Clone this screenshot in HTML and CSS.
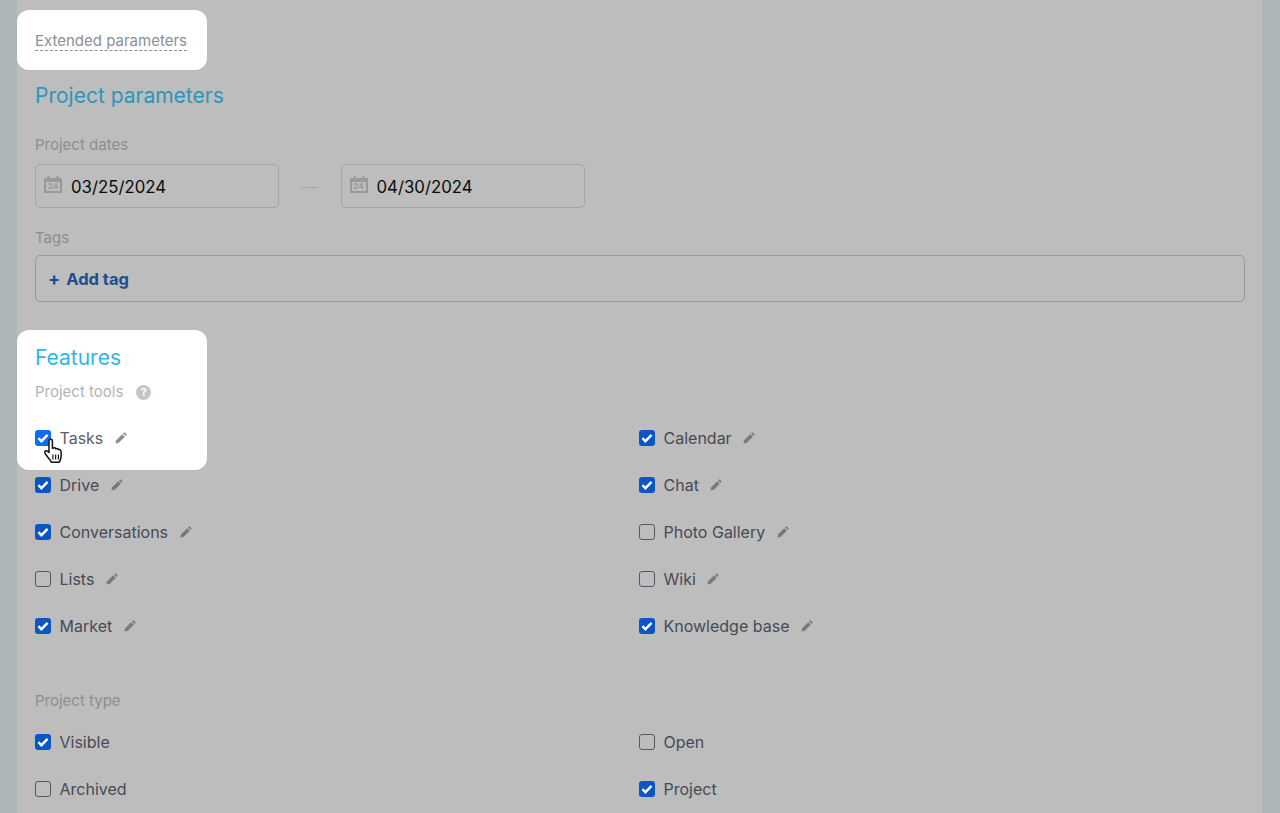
FILE: index.html
```html
<!DOCTYPE html>
<html lang="en">
<head>
<meta charset="utf-8">
<title>Project parameters</title>
<link rel="stylesheet" href="styles.css">
</head>
<body>
<svg class="defs" width="0" height="0" aria-hidden="true">
  <symbol id="pencil" viewBox="0 0 12 12">
    <path d="M0.4 11.6l0.8-3.4 6-6 2.6 2.6-6 6z" fill="currentColor"/>
    <path d="M8.1 1.4l0.8-0.8q0.5-0.4 1 0l1.5 1.5q0.4 0.5 0 1l-0.8 0.8z" fill="currentColor"/>
  </symbol>
  <symbol id="check" viewBox="0 0 16 16">
    <path d="M3.4 8.2l3 3 6.2-6.4" fill="none" stroke="#fff" stroke-width="2.4"/>
  </symbol>
  <symbol id="cal" viewBox="0 0 20 18">
    <path d="M1 3h18v15H1z" fill="#999"/>
    <path d="M3 7h14v9H3z" fill="#bdbdbd"/>
    <rect x="4.5" y="1" width="2" height="3.5" fill="#999"/>
    <rect x="13.5" y="1" width="2" height="3.5" fill="#999"/>
  </symbol>
</svg>
<main class="panel">
  <div class="spot spot-tools"></div>
  <div class="ext-spot"><span class="ext-link">Extended parameters</span></div>
  <h2 class="title project-title">Project parameters</h2>
  <div class="label dates-label">Project dates</div>
  <div class="dates">
    <div class="date-input"><span class="cal-wrap"><svg class="cal-icon"><use href="#cal"/></svg><span class="cal-num">24</span></span><span>03/25/2024</span></div>
    <span class="date-dash"></span>
    <div class="date-input"><span class="cal-wrap"><svg class="cal-icon"><use href="#cal"/></svg><span class="cal-num">24</span></span><span>04/30/2024</span></div>
  </div>
  <div class="label tags-label">Tags</div>
  <div class="tag-box"><span class="add-plus">+</span><span class="add-tag">Add tag</span></div>
  <h2 class="title features-title">Features</h2>
  <div class="label tools-label">Project tools <span class="help">?</span></div>
  <div class="options tools">
    <label class="opt lit"><span class="box on"><svg><use href="#check"/></svg></span>Tasks<svg class="pen"><use href="#pencil"/></svg></label>
    <label class="opt"><span class="box on"><svg><use href="#check"/></svg></span>Calendar<svg class="pen"><use href="#pencil"/></svg></label>
    <label class="opt"><span class="box on"><svg><use href="#check"/></svg></span>Drive<svg class="pen"><use href="#pencil"/></svg></label>
    <label class="opt"><span class="box on"><svg><use href="#check"/></svg></span>Chat<svg class="pen"><use href="#pencil"/></svg></label>
    <label class="opt"><span class="box on"><svg><use href="#check"/></svg></span>Conversations<svg class="pen"><use href="#pencil"/></svg></label>
    <label class="opt"><span class="box"></span>Photo Gallery<svg class="pen"><use href="#pencil"/></svg></label>
    <label class="opt"><span class="box"></span>Lists<svg class="pen"><use href="#pencil"/></svg></label>
    <label class="opt"><span class="box"></span>Wiki<svg class="pen"><use href="#pencil"/></svg></label>
    <label class="opt"><span class="box on"><svg><use href="#check"/></svg></span>Market<svg class="pen"><use href="#pencil"/></svg></label>
    <label class="opt"><span class="box on"><svg><use href="#check"/></svg></span>Knowledge base<svg class="pen"><use href="#pencil"/></svg></label>
  </div>
  <div class="label type-label">Project type</div>
  <div class="options">
    <label class="opt"><span class="box on"><svg><use href="#check"/></svg></span>Visible</label>
    <label class="opt"><span class="box"></span>Open</label>
    <label class="opt"><span class="box"></span>Archived</label>
    <label class="opt"><span class="box on"><svg><use href="#check"/></svg></span>Project</label>
  </div>
  <svg class="hand" viewBox="0 0 20 26">
    <path d="M5.2 2.6c0-2 3-2 3 0v6.2l1-.2c1-.2 1.7.2 2 .8.8-.4 1.8-.2 2.2.6.9-.3 2 .2 2.2 1.2.3 2 .4 4.6-.2 6.8-.3 1.2-.8 2-1.2 3H7.2c-.6-1.6-1.8-3-3-4.4-1-1.2-2.2-2.6-2.6-3.8-.4-1.4 1-2.3 2.2-1.4l1.4 1.2z" fill="#fff" stroke="#111" stroke-width="1.3" stroke-linejoin="round"/>
    <path d="M8.6 14.4v4.2M11 14.4v4.2M13.4 14.4v4.2" stroke="#111" stroke-width="1"/>
  </svg>
</main>
</body>
</html>
```
FILE: styles.css
```css
* { box-sizing: border-box; }
html, body { margin: 0; height: 813px; overflow: hidden; }
body {
  background: #adb5b9;
  padding: 0 18px 0 17px;
  font-family: Inter, "Liberation Sans", sans-serif;
  color: #474a54;
}
.defs { position: absolute; }
.panel {
  position: relative;
  height: 813px;
  overflow: hidden;
  background: #bdbdbd;
  padding: 10px 17px 0 18px;
}
.ext-spot {
  width: 190px;
  height: 60px;
  margin-left: -18px;
  padding: 20px 0 0 18px;
  background: #fff;
  border-radius: 12px;
}
.ext-link {
  display: inline-block;
  font-size: 15px;
  line-height: 18px;
  color: #8b8f98;
  border-bottom: 1px dashed #8b8f98;
}
.title { margin: 0; font-weight: 400; font-size: 21px; line-height: 26px; }
.project-title { margin-top: 13px; color: #2c96bb; }
.features-title { position: relative; margin-top: 43px; color: #2fb6e8; }
.label { font-size: 15px; line-height: 18px; color: #8e8e8e; }
.dates-label { margin-top: 27px; }
.dates { display: flex; align-items: center; margin-top: 10px; }
.date-input {
  display: flex;
  align-items: center;
  width: 244px;
  height: 44px;
  padding: 1px 0 0 7px;
  border: 1px solid #a5a5a5;
  border-radius: 5px;
  font-size: 16.8px;
  color: #0a0a0a;
}
.cal-wrap { position: relative; width: 20px; height: 18px; margin-right: 8px; margin-top: -5px; }
.cal-icon { display: block; width: 20px; height: 18px; }
.cal-num {
  position: absolute;
  left: 0;
  right: 0;
  top: 7px;
  text-align: center;
  font-size: 8px;
  line-height: 9px;
  font-weight: 700;
  color: #999;
}
.date-dash { width: 17px; height: 1px; margin: 3px 22.5px 0 22px; background: #a5a5a5; }
.tags-label { margin-top: 21px; }
.tag-box {
  display: flex;
  align-items: center;
  height: 47px;
  margin-top: 8px;
  padding-left: 12px;
  border: 1px solid #989898;
  border-radius: 5px;
}
.add-plus { font-size: 18px; font-weight: 700; color: #1c4f8f; margin-right: 6px; }
.add-tag { font-size: 16.5px; font-weight: 700; color: #1c4f8f; }
.tools-label { position: relative; margin-top: 12px; color: #b3b3b3; display: flex; align-items: center; gap: 13px; }
.help {
  display: inline-flex;
  align-items: center;
  justify-content: center;
  width: 15px;
  height: 15px;
  border-radius: 50%;
  background: #c6c6c6;
  color: #fff;
  font-size: 11px;
  font-weight: 700;
}
.spot {
  position: absolute;
  background: #fff;
  border-radius: 12px;
}
.spot-tools { left: 0; top: 330px; width: 190px; height: 140px; }
.options {
  position: relative;
  display: grid;
  grid-template-columns: 604px 1fr;
  grid-auto-rows: 47px;
}
.tools { margin-top: 13px; height: 235px; }
.opt {
  display: flex;
  align-items: center;
  font-size: 16px;
  height: 47px;
}
.box {
  flex: none;
  width: 16px;
  height: 16px;
  margin-right: 8.5px;
  border: 1px solid #55585f;
  border-radius: 3px;
}
.box svg { display: block; width: 16px; height: 16px; }
.box.on { background: #0b55c5; border: 0; }
.lit { color: #5b5e68; }
.lit .box.on { background: #0d6cf0; }
.pen { width: 12px; height: 12px; margin-left: 11.5px; color: #77797e; }
.lit .pen { color: #8d8f94; }
.type-label { margin-top: 40px; margin-bottom: 5px; line-height: 24px; }
.hand { position: absolute; left: 26px; top: 438px; width: 23px; height: 30px; }
```
